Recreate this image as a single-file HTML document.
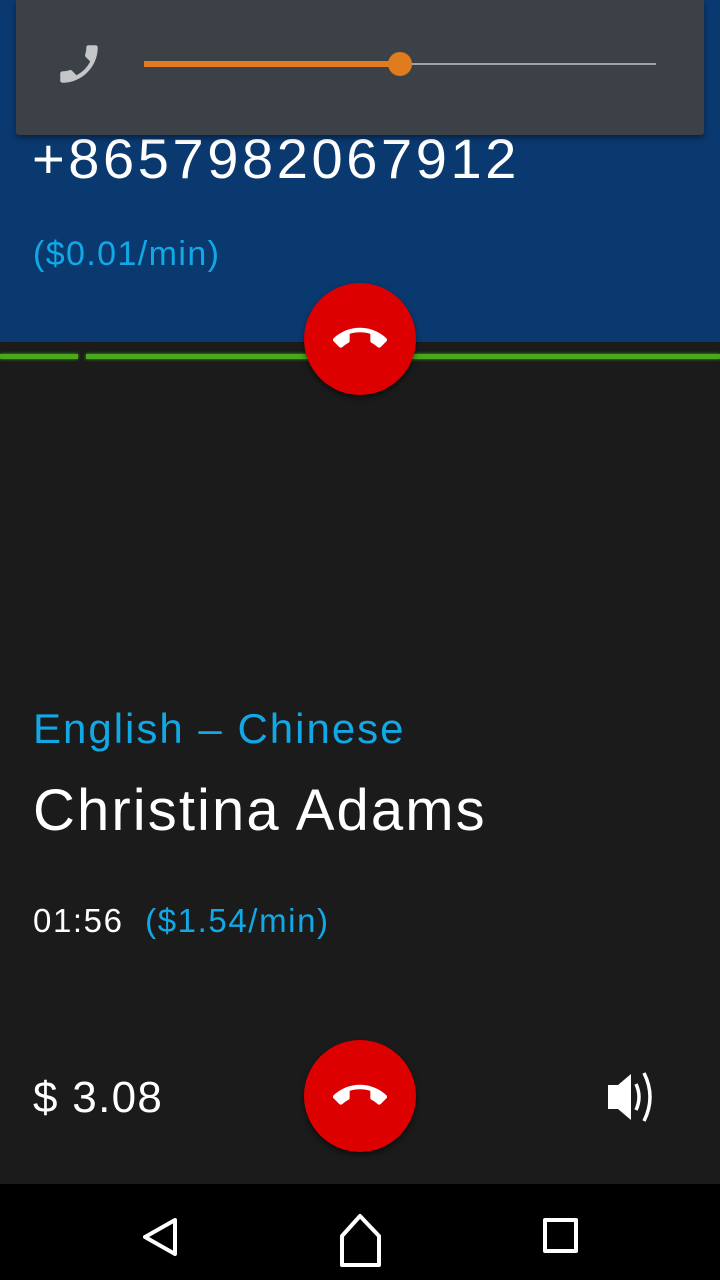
<!DOCTYPE html>
<html><head><meta charset="utf-8"><style>
*{margin:0;padding:0;box-sizing:border-box}
body{width:720px;height:1280px;background:#1b1b1b;position:relative;overflow:hidden;font-family:"Liberation Sans",sans-serif;color:#fff}
.t{position:absolute;white-space:nowrap;line-height:1}
.blue{position:absolute;left:0;top:0;width:720px;height:342px;background:#0a3970}
.green{position:absolute;top:354px;height:5px;background:#4aa81c;box-shadow:0 0 3px #4aa81c}
.btn{position:absolute;width:112px;height:112px;border-radius:50%;background:#dc0000;box-shadow:0 3px 6px rgba(0,0,0,.5);left:304px}
.btn svg{position:absolute;left:29px;top:29px}
</style></head><body>
<div class="blue"></div>
<div class="t" style="left:32px;top:131px;font-size:56px;letter-spacing:3.6px">+8657982067912</div>
<div class="t" style="left:33px;top:237px;font-size:34px;color:#12a8e6;letter-spacing:1.4px">($0.01/min)</div>
<div class="green" style="left:0;width:78px"></div>
<div class="green" style="left:86px;width:634px"></div>
<div style="position:absolute;left:16px;top:0;width:688px;height:135px;background:#3c4148;border-radius:0 0 3px 3px;box-shadow:0 3px 6px rgba(0,0,0,.4)"></div>
<svg style="position:absolute;left:54px;top:39px" width="50" height="50" viewBox="0 0 24 24"><g transform="translate(24,0) scale(-1,1)"><path fill="#c4c6c8" d="M6.62 10.79c1.44 2.830 3.76 5.14 6.59 6.59l2.2-2.2c.27-.27.67-.36 1.02-.24 1.12.37 2.33.57 3.57.57.55 0 1 .45 1 1V20c0 .55-.45 1-1 1-9.390 0-17-7.610-17-17 0-.55.45-1 1-1h3.5c.55 0 1 .45 1 1 0 1.25.2 2.45.57 3.57.11.35.03.74-.25 1.020l-2.2 2.2z"/></g></svg>
<div style="position:absolute;left:144px;top:63px;width:512px;height:2px;background:#a0a3a6"></div>
<div style="position:absolute;left:144px;top:61px;width:256px;height:6px;background:#e07b1e"></div>
<div style="position:absolute;left:388px;top:52px;width:24px;height:24px;border-radius:50%;background:#e07b1e"></div>
<div class="btn" style="top:283px"><svg width="54" height="54" viewBox="0 0 24 24"><path fill="#fff" d="M12 9c-1.6 0-3.15.25-4.6.72v3.1c0 .39-.23.74-.56.9-.98.49-1.87 1.12-2.66 1.85-.18.18-.43.28-.7.28-.28 0-.53-.11-.71-.29L.29 13.08C.11 12.9 0 12.65 0 12.37c0-.28.11-.53.29-.71C3.34 8.78 7.46 7 12 7s8.66 1.78 11.71 4.66c.18.18.29.43.29.71 0 .28-.11.53-.29.71l-2.48 2.48c-.18.18-.43.29-.71.29-.27 0-.52-.11-.7-.28-.79-.74-1.69-1.36-2.67-1.85-.33-.16-.56-.5-.56-.9v-3.1C15.15 9.25 13.6 9 12 9z"/></svg></div>
<div class="t" style="left:33px;top:708px;font-size:42px;color:#12a8e6;letter-spacing:2px">English – Chinese</div>
<div class="t" style="left:33px;top:782px;font-size:58px;letter-spacing:2.1px">Christina Adams</div>
<div class="t" style="left:33px;top:904px;font-size:33px;letter-spacing:1.6px">01:56 <span style="color:#12a8e6">&nbsp;($1.54/min)</span></div>
<div class="t" style="left:33px;top:1076px;font-size:44px;letter-spacing:1.3px">$ 3.08</div>
<div class="btn" style="top:1040px"><svg width="54" height="54" viewBox="0 0 24 24"><path fill="#fff" d="M12 9c-1.6 0-3.15.25-4.6.72v3.1c0 .39-.23.74-.56.9-.98.49-1.87 1.12-2.66 1.850-.18.18-.43.28-.7.28-.28 0-.53-.11-.71-.29L.29 13.08C.11 12.9 0 12.65 0 12.37c0-.28.11-.53.29-.71C3.34 8.78 7.46 7 12 7s8.66 1.78 11.71 4.66c.18.18.29.43.29.71 0 .28-.11.53-.29.71l-2.48 2.48c-.18.18-.43.29-.71.29-.27 0-.52-.11-.7-.28-.79-.74-1.69-1.36-2.67-1.85-.33-.16-.56-.5-.56-.9v-3.1C15.15 9.25 13.6 9 12 9z"/></svg></div>
<svg style="position:absolute;left:606px;top:1070px" width="54" height="54" viewBox="0 0 54 54"><path fill="#fff" d="M2 15h10l13-11v46L12 39H2z"/><path fill="none" stroke="#fff" stroke-width="3.5" d="M30 14q6 13 0 26M38 3q12 24 0 48"/></svg>
<div style="position:absolute;left:0;top:1184px;width:720px;height:96px;background:#000"></div>
<svg style="position:absolute;left:0;top:1184px" width="720" height="96"><g fill="none" stroke="#fff" stroke-width="4" stroke-linejoin="round"><path d="M175 36L145 53 175 70z"/><path d="M360 32L342 52V81H379V52z"/><rect x="545" y="36" width="31" height="31"/></g></svg>
</body></html>
